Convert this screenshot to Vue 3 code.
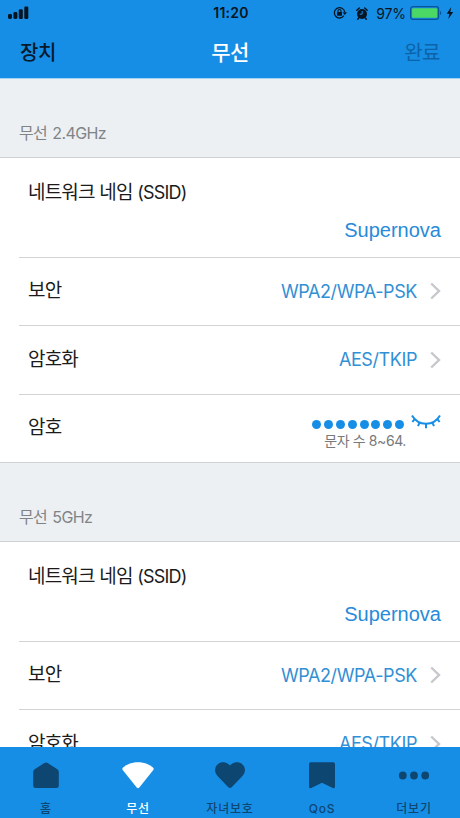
<script setup>
const groups = [
  { band: '2.4GHz', name: 'Supernova' },
  { band: '5GHz', name: 'Supernova' },
]
const tabs = [
  { id: 'home', label: '홈' },
  { id: 'wifi', label: '무선', active: true },
  { id: 'heart', label: '자녀보호' },
  { id: 'qos', label: 'QoS' },
  { id: 'more', label: '더보기' },
]
</script>

<template>
  <div class="screen">
    <header class="top">
      <div class="status">
        <svg class="signal" width="22" height="14" viewBox="0 0 22 14">
          <rect x="0" y="8" width="4" height="5" rx="1.4" />
          <rect x="5.4" y="6" width="4" height="7" rx="1.4" />
          <rect x="10.8" y="3.2" width="4" height="9.8" rx="1.2" />
          <rect x="16.3" y="0.6" width="4" height="12.4" rx="1.2" />
        </svg>
        <span class="time">11:20</span>
        <div class="indicators">
          <svg width="14" height="14" viewBox="0 0 14 14">
            <path d="M10.9 9.7A5.2 5.2 0 1 1 11.7 6" fill="none" stroke="#061523" stroke-width="1.3" />
            <path d="M9.5 6.2h4.5l-2.2 2.9z" />
            <rect x="4" y="6" width="5" height="3.8" rx=".5" />
            <path d="M5 6.3V5a1.5 1.5 0 0 1 3 0v1.3" fill="none" stroke="#061523" stroke-width="1.1" />
          </svg>
          <svg class="alarm" width="12" height="13" viewBox="0 0 12 13">
            <circle cx="6" cy="7" r="5" />
            <path d="M.8 3.3 3.3 1M11.2 3.3 8.7 1M2.7 11l-1 1.2M9.3 11l1 1.2" stroke="#061523" stroke-width="1.5" stroke-linecap="round" />
            <path d="M6.2 4v3.2H3.7" fill="none" stroke="#178ee6" stroke-width="1" />
          </svg>
          <span class="percent">97%</span>
          <svg class="battery" width="32" height="14" viewBox="0 0 32 14">
            <rect x=".6" y=".7" width="28" height="12.6" rx="2.4" fill="#168be2" stroke="#07549b" stroke-width="1.2" />
            <rect x="2.1" y="2.2" width="25" height="9.6" rx="1.1" fill="#4cd864" />
            <path d="M30 5v4q1.3-.5 1.3-2T30 5z" fill="#07549b" />
          </svg>
          <svg class="bolt" width="8" height="12" viewBox="0 0 8 12"><path d="M5.2 0 .7 6.7h2.7L2.3 12l4.9-7H4.3z" /></svg>
        </div>
      </div>
      <nav class="bar">
        <span class="back">장치</span>
        <h1>무선</h1>
        <span class="done">완료</span>
      </nav>
    </header>

    <main class="content">
      <section v-for="g in groups" :key="g.band">
        <h2>무선 <span class="latin">{{ g.band }}</span></h2>
        <div class="card">
          <div class="row ssid">
            <span class="label">네트워크 네임 <span class="latin">(SSID)</span></span>
            <span class="name">{{ g.name }}</span>
          </div>
          <div class="row">
            <span class="label">보안</span>
            <span class="value wpa">WPA2/WPA-PSK</span>
            <svg class="chevron" width="11" height="18" viewBox="0 0 11 18"><path d="M1.2 1.5 9 9l-7.8 7.5" /></svg>
          </div>
          <div class="row">
            <span class="label">암호화</span>
            <span class="value aes">AES/TKIP</span>
            <svg class="chevron" width="11" height="18" viewBox="0 0 11 18"><path d="M1.2 1.5 9 9l-7.8 7.5" /></svg>
          </div>
          <div class="row password">
            <span class="label">암호</span>
            <div class="secret">
              <div class="masked">
                <div class="dots"><i v-for="n in 8" :key="n"></i></div>
                <svg width="30" height="16" viewBox="0 0 30 16">
                  <path d="M1 1.5C7.5 12.5 22.5 12.5 29 1.5" />
                  <path d="M3.8 4.8 1.4 8M8.7 8.4 7 12.2M15 9.7v4.6M21.3 8.4l1.7 3.8M26.2 4.8 28.6 8" />
                </svg>
              </div>
              <span class="hint">문자 수 <span class="latin">8~64.</span></span>
            </div>
          </div>
        </div>
      </section>
    </main>

    <footer class="tabs">
      <div v-for="t in tabs" :key="t.id" class="tab" :class="[t.id, { active: t.active }]">
        <svg width="34" height="30" viewBox="0 0 34 30">
          <path v-if="t.id === 'home'" d="M15.4 2.1q1.6-1 3.2 0l9.4 6q1.8 1.2 1.8 3V24.500q0 2.500-2.500 2.500H6.700q-2.500 0-2.500-2.500V11.100q0-1.800 1.800-3z" />
          <path v-else-if="t.id === 'wifi'" d="M2 6.500C10-.6 24-.6 32 6.500q1.200 1.200.3 2.500L18.500 26.300q-1.500 1.700-3 0L1.700 9q-.9-1.300.3-2.500z" />
          <path v-else-if="t.id === 'heart'" d="M17 4.500C12.500-.6 5.500.5 3 5.300 1 9.300 2.300 12.700 5 15.500L15.300 26.300q1.700 1.500 3.400 0L29 15.500c2.700-2.800 4-6.200 2-10.200C28.500.5 21.500-.6 17 4.500z" />
          <path v-else-if="t.id === 'qos'" d="M5.800 1.300H28.200q1.800 0 1.800 1.800V25.500q0 2.500-2.300 1.400L17 21.800 6.300 26.900Q4 28 4 25.500V3.100q0-1.800 1.800-1.800z" />
          <g v-else><circle cx="5.800" cy="14.500" r="3.900" /><circle cx="17" cy="14.500" r="3.900" /><circle cx="28.200" cy="14.500" r="3.900" /></g>
        </svg>
        <span>{{ t.label }}</span>
      </div>
    </footer>
  </div>
</template>

<style>
body { margin: 0; }
</style>

<style scoped>
.screen {
  display: flex;
  flex-direction: column;
  width: 460px;
  height: 818px;
  overflow: hidden;
  background: #ecf0f3;
  color: #1b1b1b;
  font-family: Inter, "Noto Sans CJK KR", sans-serif;
}
svg { display: block; flex: none; }
.top { flex: none; height: 78px; background: #178ee6; border-bottom: 1px solid #a4d3f3; }
.status {
  display: grid;
  grid-template-columns: 1fr auto 1fr;
  align-items: center;
  height: 26px;
  padding: 0 6px 0 8px;
  color: #061523;
  fill: #061523;
}
.time { font-size: 14px; line-height: 26px; font-weight: 600; letter-spacing: .2px; }
.indicators { display: flex; align-items: center; justify-content: flex-end; }
.alarm { margin-left: 9px; }
.percent { margin: 0 4px 0 8px; font-size: 14px; letter-spacing: -.1px; }
.bolt { margin-left: 4px; }
.bar {
  display: grid;
  grid-template-columns: 1fr auto 1fr;
  align-items: center;
  height: 50px;
  padding: 0 20px;
  font-size: 20px;
  letter-spacing: -.5px;
}
.back { color: #061a2c; font-weight: 500; }
h1 { margin: 0; color: #fff; font-size: 21px; font-weight: 500; }
.done { justify-self: end; color: #0d63a8; }
.content { flex: 1; min-height: 0; overflow: hidden; }
h2 {
  display: flex;
  align-items: flex-end;
  gap: 5px;
  box-sizing: border-box;
  height: 78px;
  margin: 0;
  padding: 0 19px 12px;
  color: #818487;
  font-size: 16px;
  line-height: 24px;
  font-weight: 400;
  letter-spacing: -.6px;
}
.card { background: #fff; border-top: 1px solid #cfd1d3; border-bottom: 1px solid #cfd1d3; }
.row {
  display: flex;
  align-items: center;
  box-sizing: border-box;
  height: 68.500px;
  margin-left: 19px;
  padding: 0 19px 0 9px;
  border-bottom: 1px solid #d2d3d4;
}
.row:last-child { border-bottom: 0; }
.label { flex: 1; font-size: 19px; line-height: 28px; letter-spacing: -.8px; }
.label .latin { font-size: 18px; }
.ssid { flex-direction: column; align-items: stretch; height: 99.500px; padding-top: 21px; }
.ssid .label { flex: none; }
.name {
  align-self: flex-end;
  margin-top: 10px;
  color: #278bd9;
  font: 20px/26px "Liberation Sans", sans-serif;
}
.value { color: #318fd5; font-size: 18px; letter-spacing: -.4px; }
.chevron { margin-left: 13px; fill: none; stroke: #c7c7cc; stroke-width: 2.400; }
.password { height: 67.500px; }
.secret { display: flex; flex-direction: column; align-items: flex-end; padding-top: 8px; }
.masked { display: flex; align-items: center; gap: 7px; height: 18px; }
.masked svg { fill: none; stroke: #178ee6; stroke-width: 2; }
.dots { display: flex; gap: 2.800px; padding-top: 4px; }
.dots i { width: 9px; height: 9px; border-radius: 50%; background: #178ee6; }
.hint { margin-right: 35px; color: #77797b; font-size: 14px; line-height: 20px; letter-spacing: -.4px; }
.tabs {
  display: grid;
  grid-template-columns: repeat(5, 1fr);
  flex: none;
  height: 71px;
  background: #178ee6;
}
.tab { display: flex; flex-direction: column; align-items: center; padding-top: 14px; color: #0e4672; fill: #0e4672; }
.tab span { margin-top: 9px; font-size: 12px; line-height: 18px; font-weight: 500; letter-spacing: .8px; white-space: nowrap; }
.tab.active { color: #fff; fill: #fff; }
</style>
